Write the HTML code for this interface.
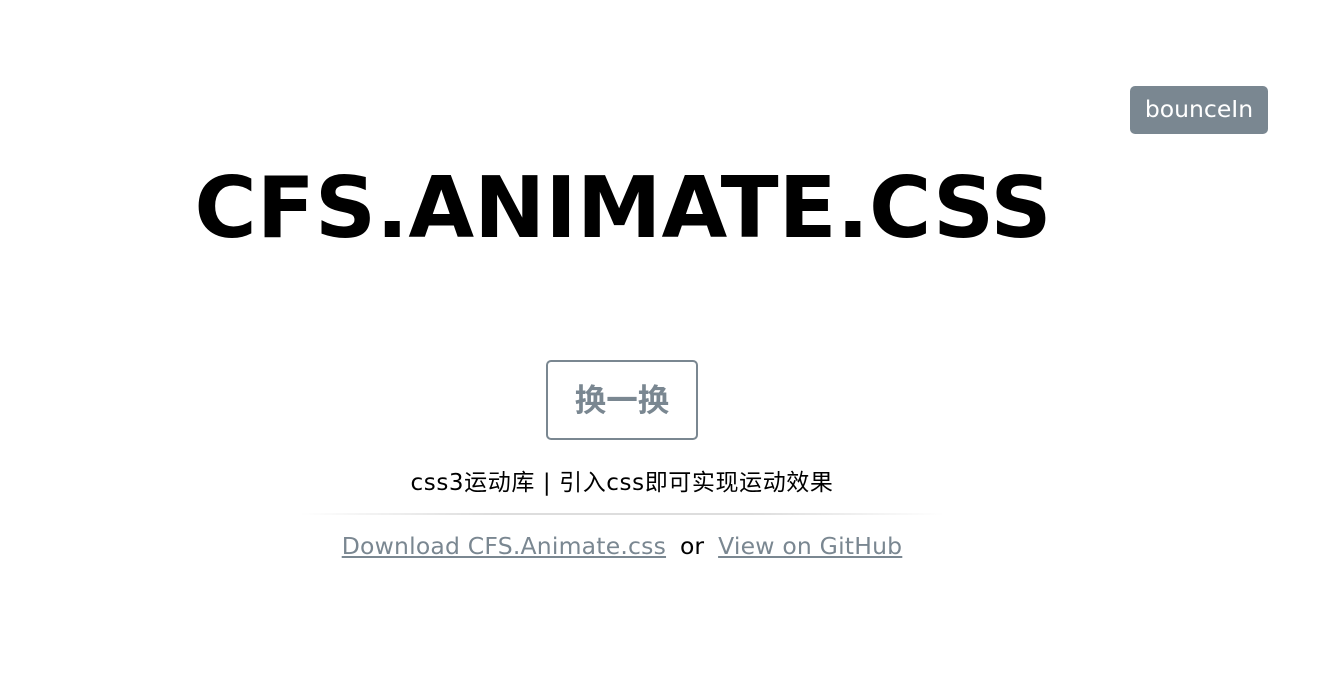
<!DOCTYPE html>
<html><head><meta charset="utf-8"><style>
html,body{margin:0;padding:0;background:#fff;width:1320px;height:696px;overflow:hidden;font-family:"DejaVu Sans","Noto Sans CJK SC",sans-serif;}
.badge{position:absolute;left:1130px;top:86px;width:138px;height:48px;background:#7a8791;border-radius:5px;color:#fff;font-size:23.5px;line-height:46px;text-align:center;}
h1{position:absolute;left:0;width:1246px;top:159px;margin:0;text-align:center;font-size:85px;font-weight:bold;line-height:100px;color:#000;}
.btn{position:absolute;left:546px;top:360px;width:148px;height:76px;border:2px solid #7a8791;border-radius:5px;color:#7a8791;font-size:31.5px;font-weight:bold;line-height:78px;text-align:center;}
.sub{position:absolute;left:0;width:1244px;top:468px;text-align:center;font-size:23px;line-height:30px;color:#000;letter-spacing:0.6px;}
.hr{position:absolute;left:300px;width:644px;top:513px;height:2px;background:linear-gradient(90deg,rgba(220,220,220,0),#ddd 30%,#ddd 70%,rgba(220,220,220,0));}
.links{position:absolute;left:0;width:1244px;top:530px;text-align:center;font-size:23.5px;line-height:32px;color:#000;}
.links a{color:#7a8791;text-decoration:underline;letter-spacing:0.2px;}
.or{margin:0 14px;}
</style></head><body>
<div class="badge">bounceIn</div>
<h1>CFS.ANIMATE.CSS</h1>
<div class="btn">换一换</div>
<div class="sub">css3运动库&nbsp;|&nbsp;引入css即可实现运动效果</div>
<div class="hr"></div>
<div class="links"><a>Download CFS.Animate.css</a><span class="or">or</span><a>View on GitHub</a></div>
</body></html>
